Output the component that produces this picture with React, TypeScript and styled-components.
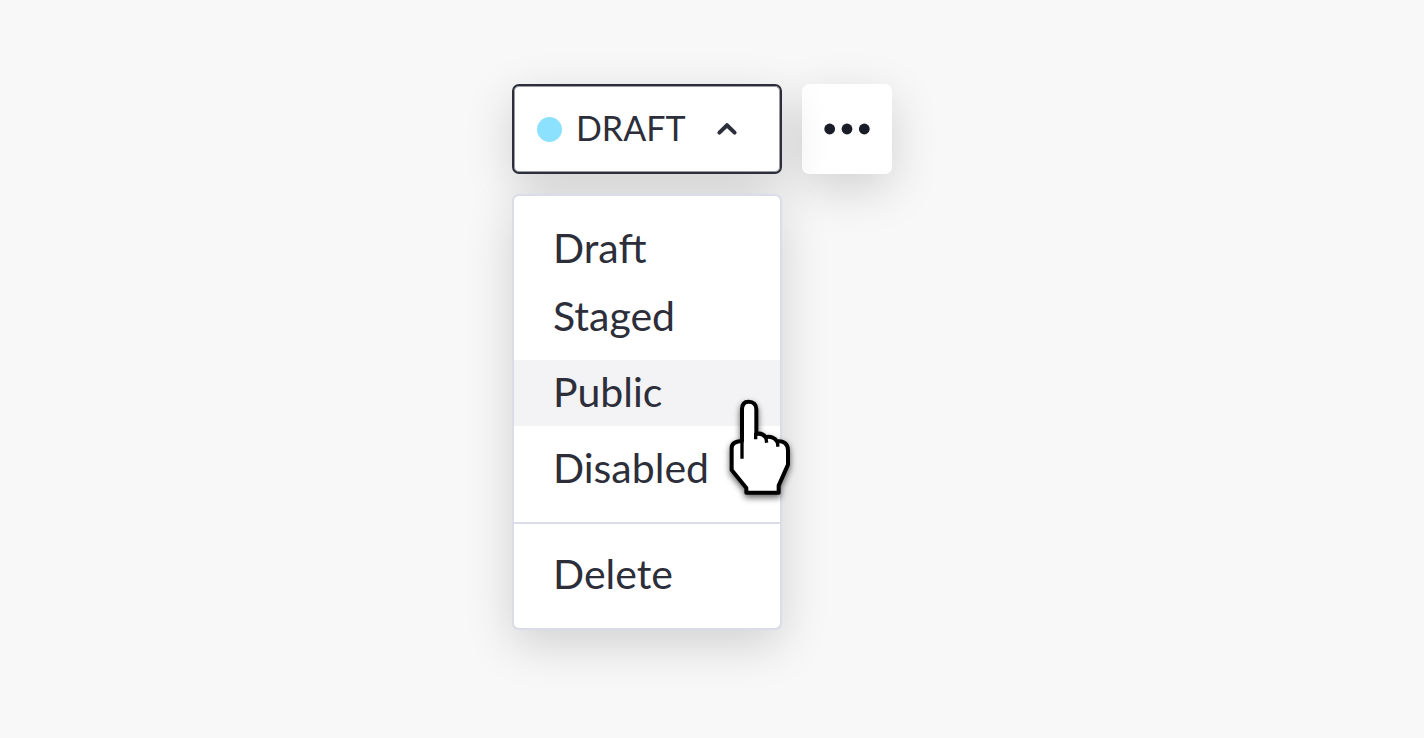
import React from "react";
import styled, { createGlobalStyle } from "styled-components";

const GlobalStyle = createGlobalStyle`
  *, *::before, *::after { box-sizing: border-box; }
  body {
    margin: 0;
    background: #f8f8f8;
    color: #2c2e3a;
    font-family: Lato, "Open Sans", sans-serif;
  }
`;

const shadow = "0 14px 48px rgba(0, 0, 0, 0.16)";

const Page = styled.main`
  min-height: 100vh;
  padding: 84px 24px;
  display: flex;
  justify-content: center;
`;

const Toolbar = styled.div`
  display: flex;
  align-items: flex-start;
  gap: 20px;
  flex: 0 1 400px;
`;

const Dropdown = styled.div`
  position: relative;
  z-index: 1;
  display: flex;
  flex-direction: column;
  gap: 20px;
  flex: 0 0 270px;
`;

const StatusButton = styled.button`
  position: relative;
  z-index: 1;
  display: flex;
  align-items: center;
  height: 90px;
  padding: 0 42px 0 23px;
  border: 2px solid #2c2e3a;
  border-radius: 7px;
  background: #fff;
  box-shadow: inset 0 0 0 1px #9a9ba1;
  color: inherit;
  font: 400 34px/40px Lato, "Open Sans", sans-serif;
  cursor: pointer;
`;

const StatusDot = styled.span`
  width: 25px;
  height: 25px;
  margin-right: 14px;
  border-radius: 50%;
  background: #8ce1ff;
`;

const StatusLabel = styled.span`
  padding-bottom: 2px;
`;

const Chevron = styled.svg`
  width: 22px;
  height: 14px;
  margin-left: auto;
  fill: none;
  stroke: #2c2e3a;
  stroke-width: 4;
  stroke-linecap: round;
  stroke-linejoin: round;
`;

const ButtonShade = styled.div`
  display: grid;
  border-radius: 7px;
  box-shadow: ${shadow};
`;

const MoreButton = styled.button`
  display: grid;
  place-items: center;
  width: 90px;
  height: 90px;
  padding: 0;
  border: 0;
  border-radius: 7px;
  background: #fff;
  box-shadow: ${shadow};
  cursor: pointer;
`;

const Dots = styled.svg`
  width: 48px;
  height: 12px;
  fill: #1a1c27;
`;

const Menu = styled.div`
  position: relative;
  border: 2px solid #dadce7;
  border-radius: 7px;
  background: #fff;
  box-shadow: ${shadow};
`;

const MenuGroup = styled.div`
  display: flex;
  flex-direction: column;
  gap: 10px;
  padding: 20px 0;

  & + & {
    padding-top: 18px;
    border-top: 2px solid #dadce7;
  }
`;

const OptionPair = styled.div`
  display: flex;
  flex-direction: column;
  gap: 2px;
`;

const Option = styled.button<{ $active?: boolean }>`
  height: 66px;
  padding: 0 39px 2px;
  border: 0;
  background: ${({ $active }) => ($active ? "#f3f3f5" : "transparent")};
  color: inherit;
  font: 400 41px/64px Lato, "Open Sans", sans-serif;
  text-align: left;
  cursor: pointer;
`;

const Pointer = styled.svg`
  position: absolute;
  top: 200px;
  right: -19px;
  width: 76px;
  height: 110px;
  pointer-events: none;
  overflow: visible;
  filter: drop-shadow(0 3px 3px rgba(0, 0, 0, 0.6));
`;

export default function App() {
  return (
    <>
      <GlobalStyle />
      <Page>
        <Toolbar>
          <Dropdown>
            <ButtonShade>
              <StatusButton type="button" aria-haspopup="menu" aria-expanded="true">
                <StatusDot />
                <StatusLabel>DRAFT</StatusLabel>
                <Chevron viewBox="0 0 22 14" aria-hidden="true">
                  <path d="M3.4 10.6 11 3.2l7.6 7.4" />
                </Chevron>
              </StatusButton>
            </ButtonShade>
            <Menu role="menu" aria-label="Status">
              <MenuGroup>
                <OptionPair>
                  <Option type="button" role="menuitem">Draft</Option>
                  <Option type="button" role="menuitem">Staged</Option>
                </OptionPair>
                <Option type="button" role="menuitem" $active>Public</Option>
                <Option type="button" role="menuitem">Disabled</Option>
              </MenuGroup>
              <MenuGroup>
                <Option type="button" role="menuitem">Delete</Option>
              </MenuGroup>
              <Pointer viewBox="40 48 228 330" aria-hidden="true">
                <path
                  fill="#fff"
                  stroke="#000"
                  strokeWidth="12"
                  strokeLinejoin="round"
                  d="M97 183V88C97 72 104 65 117 65C131 65 140 73 140 88V162C151 159 161 162 168 172C180 168 196 173 202 184C220 181 235 191 235 211V254L207 317V338H110V324L66 270V204C66 190 76 184 97 183Z"
                />
                <path
                  fill="none"
                  stroke="#000"
                  strokeWidth="10"
                  d="M97 180V236M138 158V178M168 168 171 188M202 181 205 200"
                />
              </Pointer>
            </Menu>
          </Dropdown>
          <MoreButton type="button" aria-label="More actions">
            <Dots viewBox="0 0 48 12" aria-hidden="true">
              <circle cx="6.7" cy="6" r="5.4" />
              <circle cx="24" cy="6" r="5.4" />
              <circle cx="41.3" cy="6" r="5.4" />
            </Dots>
          </MoreButton>
        </Toolbar>
      </Page>
    </>
  );
}
